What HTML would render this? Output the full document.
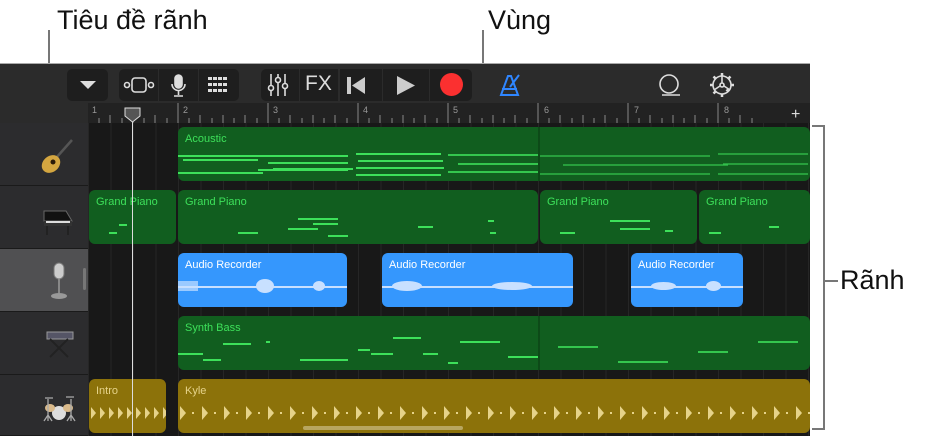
<!DOCTYPE html>
<html><head><meta charset="utf-8"><style>
*{margin:0;padding:0;box-sizing:border-box}
body{width:942px;height:436px;background:#fff;position:relative;overflow:hidden;font-family:"Liberation Sans","DejaVu Sans",sans-serif}
.a{position:absolute}
.lbl{font-size:27px;color:#111}
.tb{background:#1e1e1e;border-radius:5px}
.reg{position:absolute;border-radius:6px;overflow:hidden}
.g{background:#115e1f}
.g .t{color:#3de05a}
.b{background:#3597fd}
.b .t{color:#fff}
.y{background:#8c720a}
.y .t{color:#e6d38a}
.t{position:absolute;left:7px;top:6px;font-size:11px}
.n{position:absolute;height:2px;background:#3de05a}
.hd{position:absolute;left:0;width:88px;height:63px;background:#2c2c2e;border-bottom:1px solid #1a1a1a}
</style></head><body>
<div class="a lbl" style="left:57px;top:5px">Tiêu đề rãnh</div>
<div class="a lbl" style="left:488px;top:5px">Vùng</div>
<div class="a lbl" style="left:840px;top:265px">Rãnh</div>
<div class="a" style="left:48px;top:30px;width:2px;height:93px;background:#777"></div>
<div class="a" style="left:482px;top:30px;width:2px;height:96px;background:#777"></div>
<svg width="0" height="0" style="position:absolute"><defs>
<pattern id="dr" width="22" height="20" patternUnits="userSpaceOnUse"><path d="M2 3l6 7-6 7z" fill="#e6d38a"/><path d="M14 9h2v2h-2z" fill="#e6d38a"/></pattern>
<pattern id="dr2" width="9" height="20" patternUnits="userSpaceOnUse"><path d="M2 4l5 6-5 6z" fill="#e6d38a"/></pattern>
</defs></svg>

<div class="a" style="left:0;top:63px;width:810px;height:373px;background:#2b2b2b">
 <div class="a" style="left:0;top:0;width:810px;height:40px;background:#2b2b2b;border-top:1px solid #aaa"></div>
 <div class="a tb" style="left:67px;top:6px;width:41px;height:32px"></div>
 <div class="a" style="left:80px;top:18px;width:0;height:0;border-left:8px solid transparent;border-right:8px solid transparent;border-top:8px solid #ddd"></div>
 <div class="a tb" style="left:119px;top:6px;width:120px;height:32px"></div>
 <div class="a" style="left:158px;top:6px;width:1px;height:32px;background:#2b2b2b"></div>
 <div class="a" style="left:198px;top:6px;width:1px;height:32px;background:#2b2b2b"></div>
 <svg class="a" style="left:122px;top:10px" width="116" height="26">
  <g fill="none" stroke="#ddd" stroke-width="1.6"><circle cx="5" cy="12" r="2.5"/><rect x="10" y="5" width="14" height="14" rx="3"/><circle cx="29" cy="12" r="2.5"/>
  <rect x="53" y="2" width="7" height="13" rx="3.5" fill="#ddd"/><path d="M50 11a6.5 6.5 0 0 0 13 0M56.5 18v4M52 23h9"/></g>
  <g fill="#ddd"><rect x="86" y="4" width="4" height="3"/><rect x="91" y="4" width="4" height="3"/><rect x="96" y="4" width="4" height="3"/><rect x="101" y="4" width="4" height="3"/><rect x="86" y="10" width="4" height="3"/><rect x="91" y="10" width="4" height="3"/><rect x="96" y="10" width="4" height="3"/><rect x="101" y="10" width="4" height="3"/><rect x="86" y="16" width="4" height="3"/><rect x="91" y="16" width="4" height="3"/><rect x="96" y="16" width="4" height="3"/><rect x="101" y="16" width="4" height="3"/></g>
 </svg>
 <div class="a tb" style="left:261px;top:6px;width:211px;height:32px"></div>
 <div class="a" style="left:299px;top:6px;width:1px;height:32px;background:#2b2b2b"></div>
 <div class="a" style="left:338px;top:6px;width:2px;height:32px;background:#2b2b2b"></div>
 <div class="a" style="left:382px;top:6px;width:1px;height:32px;background:#2b2b2b"></div>
 <div class="a" style="left:429px;top:6px;width:1px;height:32px;background:#2b2b2b"></div>
 <svg class="a" style="left:266px;top:8px" width="30" height="28"><g stroke="#ddd" stroke-width="1.6" fill="none"><path d="M5 3v22M12 3v22M19 3v22"/><circle cx="5" cy="17" r="2.5" fill="#1e1e1e"/><circle cx="12" cy="9" r="2.5" fill="#1e1e1e"/><circle cx="19" cy="15" r="2.5" fill="#1e1e1e"/></g></svg>
 <div class="a" style="left:305px;top:9px;font-size:21px;color:#ddd">FX</div>
 <svg class="a" style="left:345px;top:12px" width="24" height="22"><rect x="2" y="2" width="4" height="17" fill="#ccc"/><path d="M20 2v17L7 10.5z" fill="#ccc"/></svg>
 <svg class="a" style="left:395px;top:12px" width="24" height="22"><path d="M2 1v19l18-9.5z" fill="#ccc"/></svg>
 <div class="a" style="left:440px;top:10px;width:23px;height:23px;border-radius:50%;background:#fb3030"></div>
 <svg class="a" style="left:497px;top:10px" width="26" height="26"><g fill="none" stroke="#2f86ff" stroke-width="2"><path d="M4 22h17L14 3h-3z"/><path d="M5 16h15M13 14l9-12"/></g></svg>
 <svg class="a" style="left:657px;top:10px" width="26" height="26"><g fill="none" stroke="#ddd" stroke-width="1.6"><circle cx="12" cy="11" r="9"/><path d="M5 22h18"/></g></svg>
 <svg class="a" style="left:708px;top:8px" width="28" height="28"><g fill="none" stroke="#ddd" stroke-width="1.6"><circle cx="14" cy="14" r="9"/><circle cx="14" cy="14" r="2"/><path d="M14 12V5M12 15l-6 4M16 15l6 4"/><path d="M14 2v3M14 23v3M2 14h3M23 14h3M5.5 5.5l2 2M20.5 20.5l-2-2M5.5 22.5l2-2M22.5 5.5l-2 2" stroke-width="2.5"/></g></svg>

 <div class="a" style="left:88px;top:40px;width:722px;height:20px;background:#222"></div>
 <svg class="a" style="left:88px;top:40px" width="722" height="20">
  <g fill="#999" font-size="9" font-family="Liberation Sans"><text x="4" y="10">1</text><text x="95" y="10">2</text><text x="185" y="10">3</text><text x="275" y="10">4</text><text x="365" y="10">5</text><text x="456" y="10">6</text><text x="546" y="10">7</text><text x="636" y="10">8</text></g>
  <g stroke="#888" stroke-width="1">
   <path d="M90 0v20M180 0v20M270 0v20M360 0v20M450 0v20M540 0v20M630 0v20"/>
   <path d="M11 15v5M22 12v8M34 15v5M45 12v8M56 15v5M67 12v8M79 15v5M101 15v5M112 12v8M124 15v5M135 12v8M146 15v5M157 12v8M169 15v5M191 15v5M202 12v8M214 15v5M225 12v8M236 15v5M247 12v8M259 15v5M281 15v5M292 12v8M304 15v5M315 12v8M326 15v5M337 12v8M349 15v5M371 15v5M382 12v8M394 15v5M405 12v8M416 15v5M427 12v8M439 15v5M461 15v5M472 12v8M484 15v5M495 12v8M506 15v5M517 12v8M529 15v5M551 15v5M562 12v8M574 15v5M585 12v8M596 15v5M607 12v8M619 15v5M641 15v5M652 12v8M664 15v5"/>
  </g>
  <text x="703" y="16" fill="#ddd" font-size="16" font-family="Liberation Sans">+</text>
 </svg>

 <div class="a" style="left:88px;top:60px;width:722px;height:313px;background:#181818 repeating-linear-gradient(90deg,#262626 0 1px,transparent 1px 22.5px)"></div>

 <div class="hd" style="top:60px"></div>
 <div class="hd" style="top:123px"></div>
 <div class="hd" style="top:186px;background:#505052"></div>
 <div class="hd" style="top:249px"></div>
 <div class="hd" style="top:312px;height:61px"></div>
 <div class="a" style="left:83px;top:205px;width:3px;height:22px;background:#777;border-radius:2px"></div>
 <svg class="a" style="left:38px;top:75px" width="38" height="38"><path d="M34 2L18 20" stroke="#555" stroke-width="2.5"/><ellipse cx="13" cy="26" rx="10" ry="8" fill="#d4a640" transform="rotate(-40 13 26)"/><circle cx="15" cy="24" r="2.5" fill="#2a1a08"/></svg>
 <svg class="a" style="left:40px;top:140px" width="36" height="36"><path d="M4 8h22l6 10H4z" fill="#111" stroke="#666"/><path d="M4 18h28v5H4z" fill="#333"/><path d="M7 23v9M28 23v9" stroke="#222" stroke-width="2"/><path d="M6 19h24" stroke="#ddd" stroke-width="2"/></svg>
 <svg class="a" style="left:47px;top:198px" width="26" height="42"><rect x="7" y="2" width="10" height="16" rx="5" fill="#ccc" stroke="#777"/><path d="M12 18v14" stroke="#888" stroke-width="2"/><ellipse cx="12" cy="35" rx="8" ry="3" fill="#999"/></svg>
 <svg class="a" style="left:44px;top:266px" width="32" height="36"><path d="M3 3h26v7H3z" fill="#556" stroke="#999"/><path d="M6 10l18 18M24 10L6 28" stroke="#222" stroke-width="2"/></svg>
 <svg class="a" style="left:40px;top:330px" width="38" height="30"><circle cx="19" cy="20" r="7" fill="#ddd"/><ellipse cx="10" cy="15" rx="5" ry="4" fill="#d9b98a"/><ellipse cx="28" cy="15" rx="5" ry="4" fill="#d9b98a"/><path d="M5 5h8M26 4h8M8 6v22M31 6v22M4 28l4-6 4 6M27 28l4-6 4 6" stroke="#aaa" stroke-width="1.3" fill="none"/></svg>

 <div class="reg g" style="left:178px;top:64px;width:632px;height:54px"><div class="t">Acoustic</div>
  <div class="n" style="left:0;top:28px;width:170px"></div><div class="n" style="left:5px;top:32px;width:75px"></div><div class="n" style="left:90px;top:35px;width:80px"></div><div class="n" style="left:95px;top:41px;width:80px"></div><div class="n" style="left:0;top:45px;width:85px"></div><div class="n" style="left:80px;top:42px;width:90px"></div>
  <div class="n" style="left:178px;top:26px;width:85px"></div><div class="n" style="left:180px;top:33px;width:85px"></div><div class="n" style="left:178px;top:40px;width:88px"></div><div class="n" style="left:178px;top:47px;width:85px"></div>
  <div class="n" style="left:270px;top:27px;width:90px;opacity:.8"></div><div class="n" style="left:280px;top:36px;width:80px;opacity:.8"></div><div class="n" style="left:270px;top:44px;width:90px;opacity:.8"></div>
  <div class="n" style="left:362px;top:28px;width:170px;opacity:.5"></div><div class="n" style="left:385px;top:37px;width:165px;opacity:.5"></div><div class="n" style="left:362px;top:46px;width:170px;opacity:.5"></div><div class="n" style="left:540px;top:26px;width:90px;opacity:.5"></div><div class="n" style="left:545px;top:36px;width:85px;opacity:.5"></div><div class="n" style="left:540px;top:46px;width:90px;opacity:.5"></div>
 </div>
 <div class="a" style="left:538px;top:64px;width:2px;height:54px;background:#0d4a18"></div>
 <div class="reg g" style="left:89px;top:127px;width:87px;height:54px"><div class="t">Grand Piano</div><div class="n" style="left:30px;top:34px;width:8px"></div><div class="n" style="left:20px;top:42px;width:8px"></div></div>
 <div class="reg g" style="left:178px;top:127px;width:360px;height:54px"><div class="t">Grand Piano</div><div class="n" style="left:120px;top:28px;width:40px"></div><div class="n" style="left:135px;top:33px;width:25px"></div><div class="n" style="left:110px;top:38px;width:30px"></div><div class="n" style="left:60px;top:42px;width:20px"></div><div class="n" style="left:150px;top:45px;width:20px"></div><div class="n" style="left:240px;top:36px;width:15px"></div><div class="n" style="left:310px;top:30px;width:6px"></div><div class="n" style="left:312px;top:42px;width:6px"></div></div>
 <div class="reg g" style="left:540px;top:127px;width:157px;height:54px"><div class="t">Grand Piano</div><div class="n" style="left:70px;top:30px;width:40px"></div><div class="n" style="left:80px;top:38px;width:30px"></div><div class="n" style="left:20px;top:42px;width:15px"></div><div class="n" style="left:125px;top:40px;width:8px"></div></div>
 <div class="reg g" style="left:699px;top:127px;width:111px;height:54px"><div class="t">Grand Piano</div><div class="n" style="left:10px;top:42px;width:12px"></div><div class="n" style="left:70px;top:36px;width:10px"></div></div>

 <div class="reg b" style="left:178px;top:190px;width:169px;height:54px"><div class="t">Audio Recorder</div><div class="a" style="left:0;top:33px;width:169px;height:2px;background:#c8e0ff"></div><div class="a" style="left:78px;top:26px;width:18px;height:14px;border-radius:50%;background:#c8e0ff"></div><div class="a" style="left:135px;top:28px;width:12px;height:10px;border-radius:50%;background:#c8e0ff"></div><div class="a" style="left:0;top:28px;width:20px;height:10px;background:#c8e0ff;opacity:.7"></div></div>
 <div class="reg b" style="left:382px;top:190px;width:191px;height:54px"><div class="t">Audio Recorder</div><div class="a" style="left:0;top:33px;width:191px;height:2px;background:#c8e0ff"></div><div class="a" style="left:10px;top:28px;width:30px;height:10px;border-radius:50%;background:#c8e0ff"></div><div class="a" style="left:110px;top:29px;width:40px;height:8px;border-radius:50%;background:#c8e0ff"></div></div>
 <div class="reg b" style="left:631px;top:190px;width:112px;height:54px"><div class="t">Audio Recorder</div><div class="a" style="left:0;top:33px;width:112px;height:2px;background:#c8e0ff"></div><div class="a" style="left:20px;top:29px;width:25px;height:8px;border-radius:50%;background:#c8e0ff"></div><div class="a" style="left:75px;top:28px;width:15px;height:10px;border-radius:50%;background:#c8e0ff"></div></div>

 <div class="reg g" style="left:178px;top:253px;width:632px;height:54px"><div class="t">Synth Bass</div><div class="n" style="left:0;top:37px;width:25px"></div><div class="n" style="left:25px;top:43px;width:18px"></div><div class="n" style="left:45px;top:27px;width:28px"></div><div class="n" style="left:88px;top:25px;width:4px"></div><div class="n" style="left:122px;top:43px;width:48px"></div><div class="n" style="left:180px;top:33px;width:12px"></div><div class="n" style="left:193px;top:37px;width:22px"></div><div class="n" style="left:215px;top:21px;width:28px"></div><div class="n" style="left:245px;top:37px;width:15px"></div><div class="n" style="left:270px;top:46px;width:10px"></div><div class="n" style="left:282px;top:25px;width:40px"></div><div class="n" style="left:330px;top:40px;width:30px"></div><div class="n" style="left:380px;top:30px;width:40px;opacity:.8"></div><div class="n" style="left:440px;top:45px;width:50px;opacity:.8"></div><div class="n" style="left:520px;top:35px;width:30px;opacity:.8"></div><div class="n" style="left:580px;top:25px;width:40px;opacity:.8"></div></div>
 <div class="a" style="left:538px;top:253px;width:2px;height:54px;background:#0d4a18"></div>

 <div class="reg y" style="left:89px;top:316px;width:77px;height:54px"><div class="t">Intro</div><svg class="a" style="left:0;top:24px" width="77" height="20"><rect width="77" height="20" fill="url(#dr2)"/></svg></div>
 <div class="reg y" style="left:178px;top:316px;width:632px;height:54px"><div class="t">Kyle</div><svg class="a" style="left:0;top:24px" width="632" height="20"><rect width="632" height="20" fill="url(#dr)"/></svg><div class="a" style="left:125px;top:47px;width:160px;height:4px;border-radius:2px;background:#b8a660"></div></div>

 <div class="a" style="left:132px;top:46px;width:1px;height:327px;background:#ddd"></div>
 <svg class="a" style="left:124px;top:44px" width="18" height="16"><path d="M1 1h15v8l-7.5 6L1 9z" fill="#555" stroke="#ddd"/></svg>
</div>

<svg class="a" style="left:810px;top:120px" width="40" height="316"><path d="M2 6h12v303H2M14 161h14" fill="none" stroke="#777" stroke-width="2"/></svg>
</body></html>
